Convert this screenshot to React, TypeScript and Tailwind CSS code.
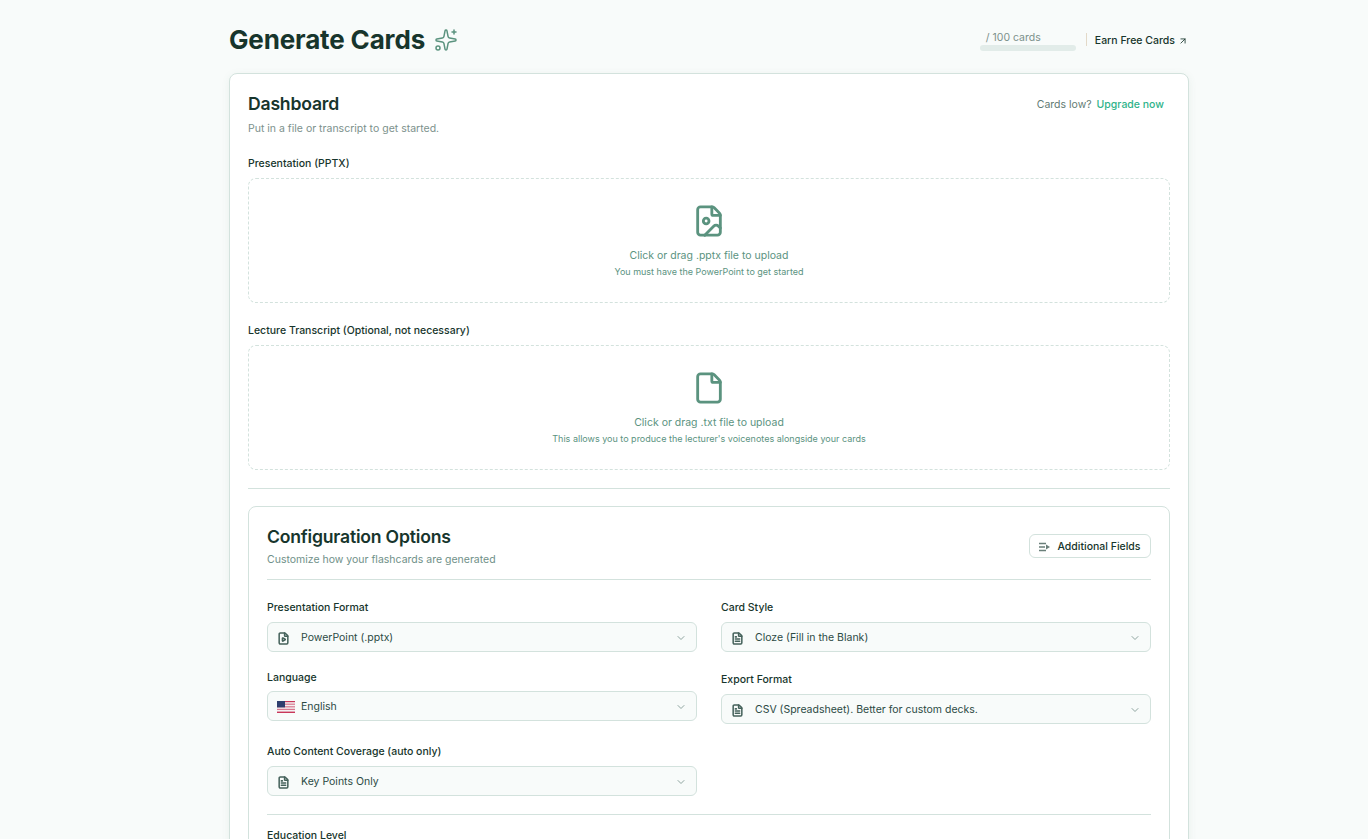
import { ArrowUpRight, ChevronDown, File, FileImage, FileText, FileVideo, Sparkles } from "lucide-react";
import type { ReactNode } from "react";

function UsFlag() {
  return (
    <svg width="18" height="12" viewBox="0 0 18 12" className="shrink-0">
      <rect width="18" height="12" fill="#f4f0f2" />
      <rect y="0" width="18" height="1.2" fill="#c9375a" />
      <rect y="2.6" width="18" height="1.2" fill="#d8798f" />
      <rect y="5.2" width="18" height="1.2" fill="#d8798f" />
      <rect y="7.8" width="18" height="1.2" fill="#d8798f" />
      <rect y="10.6" width="18" height="1.4" fill="#c9375a" />
      <rect width="8" height="6.4" fill="#2f3f6e" />
    </svg>
  );
}

function Dropzone({ icon, title, hint }: { icon: ReactNode; title: string; hint: string }) {
  return (
    <div className="flex h-[125px] flex-col items-center rounded-lg border border-dashed border-[#d3e2dd] pt-[25px] text-[#5b937f]">
      {icon}
      <p className="mt-[10px] text-[10.5px] leading-[16px]">{title}</p>
      <p className="mt-[0px] text-[9px] leading-[16px]">{hint}</p>
    </div>
  );
}

function SelectBox({ icon, value }: { icon: ReactNode; value: string }) {
  return (
    <div className="flex h-[30px] items-center rounded-md border border-[#d3e2dd] bg-[#f8fbfa] pl-[9px] pr-[9px] pt-[2px] text-[10.5px] text-[#2c4a44]">
      <span className="flex w-[24px] shrink-0 items-center">{icon}</span>
      <span className="flex-1">{value}</span>
      <ChevronDown className="h-[12px] w-[12px] text-[#8fa5a0]" strokeWidth={2} />
    </div>
  );
}

const fileIcon = <FileText className="h-[13px] w-[13px] text-[#45625b]" strokeWidth={2.8} />;

export default function App() {
  return (
    <div
      className="h-[839px] overflow-hidden bg-[#f8fbfa] pl-[50px] text-[#17352c]"
      style={{ fontFamily: "Inter, 'Noto Sans', sans-serif" }}
    >
      <div className="mx-auto w-[960px]">
        <header className="flex h-[73px] items-center justify-between pt-[6px]">
          <div className="flex items-center gap-[9px]">
            <h1 className="text-[26px] font-bold leading-none tracking-[-0.15px] text-[#17352c]">Generate Cards</h1>
            <Sparkles className="h-[24px] w-[24px] text-[#5b937f]" strokeWidth={1.5} />
          </div>
          <div className="flex items-center pr-[1px]">
            <div className="mt-[4px] w-[96px]">
              <p className="pl-[6px] text-[10.5px] leading-[12px] text-[#7c918c]">/ 100 cards</p>
              <div className="mt-[1px] h-[6px] rounded-full bg-[#e2ece9]" />
            </div>
            <span className="ml-[10px] mr-[8px] h-[13px] w-px bg-[#e3d9c8]" />
            <a className="flex items-center gap-[3px] pt-[2px] text-[10.5px] font-medium text-[#17352c]">
              Earn Free Cards
              <ArrowUpRight className="h-[10px] w-[10px]" strokeWidth={2} />
            </a>
          </div>
        </header>

        <main className="rounded-lg border border-[#d3e2dd] bg-white px-[18px] pt-[18px] shadow-[0_2px_8px_rgba(60,110,95,0.08)]">
          <div className="flex items-start justify-between">
            <div>
              <h2 className="text-[17.6px] font-semibold leading-[24px] tracking-[-0.2px]">Dashboard</h2>
              <p className="mt-[5px] text-[10.5px] leading-[16px] text-[#7c918c]">Put in a file or transcript to get started.</p>
            </div>
            <p className="pr-[6px] pt-[5px] text-[10.5px] leading-[16px] text-[#5f7a73]">
              Cards low? <span className="ml-[2px] font-medium text-[#2fb38a]">Upgrade now</span>
            </p>
          </div>

          <label className="mt-[19px] block text-[10.5px] font-medium leading-[16px]">Presentation (PPTX)</label>
          <div className="mt-[6px]">
            <Dropzone
              icon={<FileImage className="h-[34px] w-[34px]" strokeWidth={2} />}
              title="Click or drag .pptx file to upload"
              hint="You must have the PowerPoint to get started"
            />
          </div>

          <label className="mt-[20px] block text-[10.5px] font-medium leading-[16px]">Lecture Transcript (Optional, not necessary)</label>
          <div className="mt-[6px]">
            <Dropzone
              icon={<File className="h-[34px] w-[34px]" strokeWidth={2} />}
              title="Click or drag .txt file to upload"
              hint="This allows you to produce the lecturer's voicenotes alongside your cards"
            />
          </div>

          <hr className="mt-[18px] border-[#d3e2dd]" />

          <section className="mt-[17px] rounded-lg border border-[#d3e2dd] px-[18px] pt-[17px]">
            <div className="flex items-end justify-between border-b border-[#d3e2dd] pb-[11px]">
              <div>
                <h3 className="text-[17.6px] font-semibold leading-[26px] tracking-[-0.2px]">Configuration Options</h3>
                <p className="mt-[2px] text-[10.5px] leading-[16px] text-[#6f9088]">Customize how your flashcards are generated</p>
              </div>
              <button className="mb-[10px] flex h-[24px] w-[122px] items-center justify-center gap-[7px] rounded-md border border-[#d3e2dd] bg-white pt-[2px] text-[10.5px] font-medium">
                <svg width="11" height="10" viewBox="0 0 11 10" className="text-[#6a7f7a]">
                  <path d="M0 1.5h7M0 5h6M0 8.5h7" stroke="currentColor" strokeWidth="1.6" />
                  <path d="M7 2.5 11 5 7 7.5z" fill="currentColor" />
                </svg>
                Additional Fields
              </button>
            </div>

            <div className="mt-[20px] grid grid-cols-2 gap-x-[24px]">
              <div>
                <label className="block text-[10.5px] font-medium leading-[16px]">Presentation Format</label>
                <div className="mt-[6px]">
                  <SelectBox
                    value="PowerPoint (.pptx)"
                    icon={<FileVideo className="h-[13px] w-[13px] text-[#45625b]" strokeWidth={2.8} />}
                  />
                </div>
                <label className="mt-[18px] block text-[10.5px] font-medium leading-[16px]">Language</label>
                <div className="mt-[5px]">
                  <SelectBox value="English" icon={<UsFlag />} />
                </div>
                <label className="mt-[23px] block text-[10.5px] font-medium leading-[16px]">Auto Content Coverage (auto only)</label>
                <div className="mt-[6px]">
                  <SelectBox value="Key Points Only" icon={fileIcon} />
                </div>
              </div>
              <div>
                <label className="block text-[10.5px] font-medium leading-[16px]">Card Style</label>
                <div className="mt-[6px]">
                  <SelectBox value="Cloze (Fill in the Blank)" icon={fileIcon} />
                </div>
                <label className="mt-[20px] block text-[10.5px] font-medium leading-[16px]">Export Format</label>
                <div className="mt-[6px]">
                  <SelectBox value="CSV (Spreadsheet). Better for custom decks." icon={fileIcon} />
                </div>
              </div>
            </div>

            <hr className="mt-[18px] border-[#d3e2dd]" />
            <label className="mt-[13px] block text-[10.5px] font-medium leading-[16px]">Education Level</label>
            <div className="h-[60px]" />
          </section>
        </main>
      </div>
    </div>
  );
}
